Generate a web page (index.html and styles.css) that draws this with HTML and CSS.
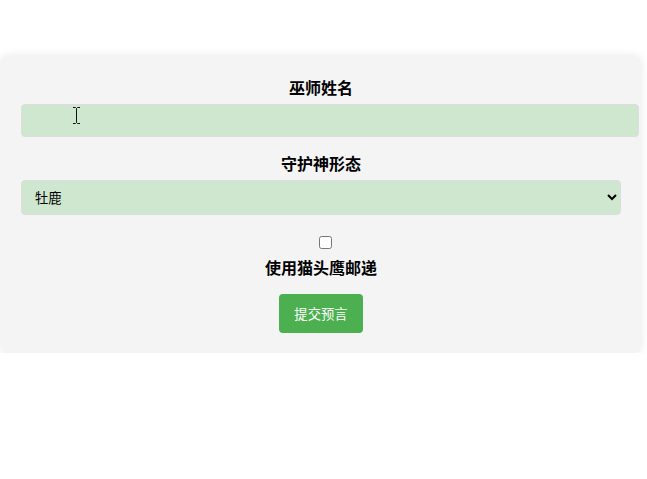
FILE: index.html
```html
<!DOCTYPE html>
<html lang="zh">
<head>
<meta charset="utf-8">
<title>巫师预言</title>
<link rel="stylesheet" href="styles.css">
</head>
<body>
<div class="page">
  <form class="card">
    <div class="group">
      <label class="label" for="name">巫师姓名</label>
      <input class="text-input" id="name" type="text">
    </div>
    <div class="group">
      <label class="label" for="patronus">守护神形态</label>
      <select class="select" id="patronus">
        <option>牡鹿</option>
        <option>水獭</option>
        <option>凤凰</option>
      </select>
    </div>
    <div class="group">
      <div class="check-row"><input class="check" id="owl" type="checkbox"></div>
      <label class="label" for="owl">使用猫头鹰邮递</label>
    </div>
    <div class="actions">
      <button class="btn" type="button">提交预言</button>
    </div>
  </form>
  <svg class="ibeam" width="9" height="17" viewBox="0 0 9 17" aria-hidden="true">
    <path d="M1 0.5h2.5l1 1 1-1H8M1 16.5h2.5l1-1 1 1H8M4.5 1.5v14" fill="none" stroke="#111" stroke-width="1"/>
  </svg>
</div>
</body>
</html>
```

FILE: styles.css
```css
html, body {
  margin: 0;
  padding: 0;
  background: #ffffff;
}

body {
  font-family: "Noto Sans CJK SC", "Noto Sans", sans-serif;
  color: #000;
}

.page {
  position: relative;
  padding: 56px 0 0 1px;
}

.card {
  width: 600px;
  padding: 20px;
  background: #f4f4f4;
  border-radius: 8px;
  box-shadow: 0 0 10px rgba(0, 0, 0, 0.1);
}

.group {
  margin-bottom: 15px;
}

.label {
  display: block;
  text-align: center;
  font-size: 16px;
  font-weight: bold;
  line-height: 23px;
  margin-bottom: 5px;
}

.text-input {
  display: block;
  box-sizing: content-box;
  width: 100%;
  height: 15px;
  margin: 0;
  padding: 8px;
  border: 1px solid #dddddd;
  border-radius: 4px;
  background: #cfe7cf;
  font-family: "Noto Sans CJK SC", sans-serif;
  font-size: 13.33px;
}

.select {
  display: block;
  box-sizing: border-box;
  width: 100%;
  height: 35px;
  margin: 1px 0 0;
  padding: 0 8px 0 9px;
  border: 1px solid #dddddd;
  border-radius: 4px;
  background-color: #cfe7cf;
  color: #000;
  font-family: "Noto Sans CJK SC", sans-serif;
  font-size: 13.33px;
}

.check-row {
  height: 26px;
  text-align: center;
}

.check {
  width: 13px;
  height: 13px;
  margin: 6px 0 0 9px;
  vertical-align: top;
}

.check-row + .label {
  margin-bottom: 0;
}

.actions {
  text-align: center;
  font-size: 0;
}

.btn {
  padding: 10px 15px;
  border: none;
  border-radius: 4px;
  background: #4caf50;
  color: #ffffff;
  font-family: "Noto Sans CJK SC", sans-serif;
  font-size: 13.33px;
  line-height: 19px;
  cursor: pointer;
}

.ibeam {
  position: absolute;
  left: 72px;
  top: 107px;
}
```
